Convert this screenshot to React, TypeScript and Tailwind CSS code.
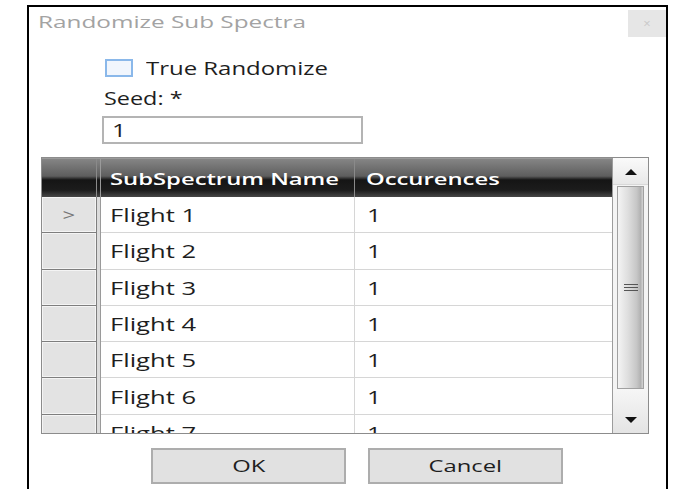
import React from 'react';

const rows = ['Flight 1', 'Flight 2', 'Flight 3', 'Flight 4', 'Flight 5', 'Flight 6', 'Flight 7'];

// Text in this dialog is drawn wide, so each label gets a horizontal stretch
function Wide({ children, className = 'scale-x-[1.38]' }: { children: React.ReactNode; className?: string }) {
  return <span className={`inline-block origin-left whitespace-nowrap ${className}`}>{children}</span>;
}

function Triangle({ up }: { up?: boolean }) {
  return (
    <svg width="12" height="7" viewBox="0 0 12 7">
      {up ? <path d="M0 7 L6 1 L12 7 Z" fill="#111" /> : <path d="M0 0 L12 0 L6 6 Z" fill="#111" />}
    </svg>
  );
}

function ScrollBar() {
  return (
    <div className="w-[36px] border-l border-[#9c9c9c] bg-[#f4f4f4] flex flex-col">
      <div className="h-[27px] flex items-center justify-center bg-gradient-to-b from-[#fafafa] to-[#e8e8e8] border-b border-[#d8d8d8]">
        <Triangle up />
      </div>
      <div className="h-[203px] mx-[4px] mt-[1px] border border-[#a0a0a0] bg-[linear-gradient(to_right,#f4f4f4,#dedede_40%,#c6c6c6_75%,#b2b2b2_90%,#d4d4d4)] flex items-center justify-center">
        <div className="w-[14px] flex flex-col gap-[2px]">
          <div className="h-[1px] bg-[#555]" />
          <div className="h-[1px] bg-[#555]" />
          <div className="h-[1px] bg-[#555]" />
        </div>
      </div>
      <div className="flex-1 flex items-end justify-center pb-[9px] bg-gradient-to-b from-[#f6f6f6] to-[#e4e4e4]">
        <Triangle />
      </div>
    </div>
  );
}

function Grid() {
  return (
    <div className="ml-[12px] mt-[13px] w-[608px] h-[277px] border border-[#8c8c8c] flex">
      <div className="flex-1 flex flex-col overflow-hidden">
        {/* column headers */}
        <div className="h-[39px] shrink-0 flex bg-[linear-gradient(to_bottom,#858585_0%,#5e5e5e_45%,#151515_55%,#1c1c1c_82%,#474747_100%)] border-t border-[#9a9a9a]">
          <div className="w-[55px] border-r border-[#8a8a8a]" />
          <div className="w-[4px] border-r border-[#9a9a9a]" />
          <div className="w-[254px] border-r border-[#8a8a8a] flex items-center pl-[9px] pt-[2px] text-white font-semibold text-[17px]">
            <Wide className="scale-x-[1.4]">SubSpectrum Name</Wide>
          </div>
          <div className="flex-1 flex items-center pl-[11px] pt-[2px] text-white font-semibold text-[17px]">
            <Wide className="scale-x-[1.4]">Occurences</Wide>
          </div>
        </div>
        {rows.map((name, i) => (
          <div key={name} className="h-[36.3px] shrink-0 flex">
            <div className="w-[55px] bg-[#e3e3e3] border-r border-b border-[#7e7e7e] shadow-[inset_1px_1px_0_#f4f4f4,inset_-1px_-1px_0_#f4f4f4] flex items-center justify-center text-[#777] text-[17px]">
              {i === 0 ? <span className="scale-x-[1.3] inline-block">&gt;</span> : null}
            </div>
            <div className="w-[4px] border-r border-[#9a9a9a] bg-[#dcdcdc]" />
            <div className="w-[254px] border-r border-b border-[#d6d6d6] flex items-center pl-[9px] pt-[2px] text-[#1e1e1e] text-[18px]">
              <Wide className="scale-x-[1.42]">{name}</Wide>
            </div>
            <div className="flex-1 border-b border-[#d6d6d6] flex items-center pl-[12px] pt-[2px] text-[#1e1e1e] text-[18px]">
              <Wide>1</Wide>
            </div>
          </div>
        ))}
      </div>
      <ScrollBar />
    </div>
  );
}

export default function App() {
  return (
    <div className="min-h-screen bg-white pt-[5px] pl-[27px]" style={{ fontFamily: '"Open Sans", "Noto Sans", sans-serif' }}>
      <div className="w-[641px] h-[484px] border-2 border-b-0 border-black flex flex-col">
        {/* title bar */}
        <div className="h-[30px] flex justify-between">
          <div className="pl-[9px] flex items-center text-[#a3a3a3] text-[17px]">
            <Wide className="scale-x-[1.43]">Randomize Sub Spectra</Wide>
          </div>
          <div className="mt-[3px] w-[38px] h-[27px] bg-[#e6e6e6] flex items-center justify-center text-[#c9c9c9] text-[13px]">
            ×
          </div>
        </div>

        <div className="pl-[73px] flex flex-col">
          <div className="mt-[22px] h-[18px] flex items-center">
            <div className="ml-[3px] w-[28px] h-[18px] border-2 border-[#8ab8ea] bg-[#f1f6fd]" />
            <div className="ml-[13px] text-[#1e1e1e] text-[18px]">
              <Wide className="scale-x-[1.33]">True Randomize</Wide>
            </div>
          </div>
          <div className="mt-[10px] h-[22px] flex items-center pl-[2px] text-[#1e1e1e] text-[18px]">
            <Wide className="scale-x-[1.3]">Seed: *</Wide>
          </div>
          <div className="mt-[7px] w-[261px] h-[28px] border-2 border-[#b4b4b4] flex items-center pl-[8px] text-[#1e1e1e] text-[18px]">
            <Wide>1</Wide>
          </div>
        </div>

        <Grid />

        <div className="mt-[14px] ml-[122px] flex gap-[22px]">
          <button className="w-[195px] h-[36px] bg-[#e1e1e1] border-2 border-[#adadad] flex items-center justify-center text-[#1e1e1e] text-[17px]">
            <span className="inline-block scale-x-[1.4]">OK</span>
          </button>
          <button className="w-[195px] h-[36px] bg-[#e1e1e1] border-2 border-[#adadad] flex items-center justify-center text-[#1e1e1e] text-[17px]">
            <span className="inline-block scale-x-[1.4]">Cancel</span>
          </button>
        </div>
      </div>
    </div>
  );
}
